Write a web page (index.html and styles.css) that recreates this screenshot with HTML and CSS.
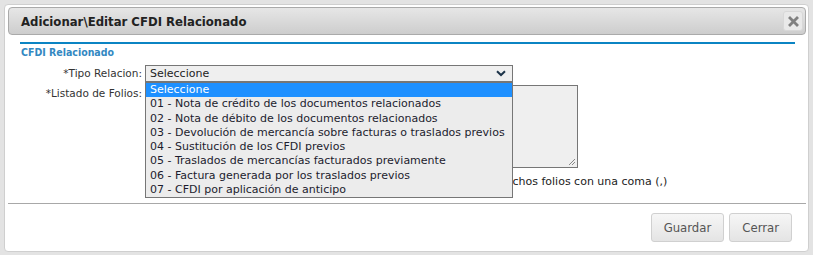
FILE: index.html
```html
<!DOCTYPE html>
<html lang="es">
<head>
<meta charset="utf-8">
<title>Adicionar\Editar CFDI Relacionado</title>
<link rel="stylesheet" href="styles.css">
</head>
<body>
<div class="dialog">
  <div class="titlebar">
    <span class="title">Adicionar\Editar CFDI Relacionado</span>
    <button class="close" type="button" aria-label="Cerrar">
      <svg width="11" height="11" viewBox="0 0 11 11"><path d="M2 2 L9 9 M9 2 L2 9" stroke="#808080" stroke-width="2.8" stroke-linecap="square"/></svg>
    </button>
  </div>
  <div class="content">
    <div class="section-head">CFDI Relacionado</div>
    <div class="form">
      <label class="lbl">*Tipo Relacion:</label>
      <div class="select-wrap">
        <div class="select">
          <span>Seleccione</span>
          <svg class="chev" width="10" height="7" viewBox="0 0 10 7"><path d="M1 1.2 L5 5 L9 1.2" fill="none" stroke="#1d3449" stroke-width="2"/></svg>
        </div>
        <ul class="options">
          <li class="sel">Seleccione</li>
          <li>01 - Nota de crédito de los documentos relacionados</li>
          <li>02 - Nota de débito de los documentos relacionados</li>
          <li>03 - Devolución de mercancía sobre facturas o traslados previos</li>
          <li>04 - Sustitución de los CFDI previos</li>
          <li>05 - Traslados de mercancías facturados previamente</li>
          <li>06 - Factura generada por los traslados previos</li>
          <li>07 - CFDI por aplicación de anticipo</li>
        </ul>
      </div>
      <label class="lbl">*Listado de Folios:</label>
      <div class="area-wrap">
        <div class="textarea">
          <svg class="grip" width="8" height="8" viewBox="0 0 8 8"><path d="M7 1 L1 7 M7 4 L4 7" stroke="#888" stroke-width="1"/></svg>
        </div>
        <div class="hint">En caso de tener varios UUIDs relacionados, por favor, separe muchos folios con una coma (,)</div>
      </div>
    </div>
  </div>
  <div class="footer">
    <button class="btn" type="button">Guardar</button>
    <button class="btn" type="button">Cerrar</button>
  </div>
</div>
</body>
</html>
```

FILE: styles.css
```css
html, body {
  margin: 0;
  padding: 0;
}
body {
  background: #e3e3e3;
  width: 813px;
  height: 255px;
  overflow: hidden;
  font-family: "DejaVu Sans", sans-serif;
  font-size: 11px;
  color: #222;
}
.dialog {
  box-sizing: border-box;
  margin: 4px 0 0 4px;
  width: 805px;
  height: 248px;
  background: #fff;
  border: 1px solid #cfcfcf;
  border-radius: 4px;
  padding: 2px 2px 0 3px;
  display: flex;
  flex-direction: column;
}
.titlebar {
  box-sizing: border-box;
  height: 28px;
  border: 1px solid #aaa;
  border-radius: 4px;
  background: linear-gradient(#e6e6e6, #cdcdcd);
  display: flex;
  align-items: center;
  justify-content: space-between;
  padding: 0 2px 0 12px;
}
.title {
  font-family: "DejaVu Sans Condensed", "DejaVu Sans", sans-serif;
  font-weight: bold;
  font-size: 13px;
  color: #222;
}
.close {
  box-sizing: border-box;
  width: 20px;
  height: 20px;
  padding: 0;
  border: 1px solid #d8d8d8;
  border-radius: 3px;
  background: #e9e9e9;
  display: flex;
  align-items: center;
  justify-content: center;
}
.content {
  margin: 7px 11px 0 12px;
  border-top: 2px solid #0b84c3;
  padding-top: 1px;
}
.section-head {
  font-family: "DejaVu Sans Condensed", "DejaVu Sans", sans-serif;
  color: #3388c2;
  font-weight: bold;
  font-size: 10.5px;
  line-height: 15px;
  padding-left: 1px;
}
.form {
  margin-top: 5px;
  display: grid;
  grid-template-columns: 122px 1fr;
  column-gap: 3px;
  row-gap: 3px;
  align-items: start;
}
.lbl {
  text-align: right;
  line-height: 17px;
  font-size: 10.5px;
  color: #333;
}
.select-wrap {
  position: relative;
  width: 368px;
  z-index: 2;
}
.select {
  box-sizing: border-box;
  height: 17px;
  border: 1px solid #767676;
  background: #efefef;
  display: flex;
  align-items: center;
  justify-content: space-between;
  padding: 0 6px 0 4px;
  line-height: 15px;
}
.options {
  position: absolute;
  top: 100%;
  left: 0;
  box-sizing: border-box;
  width: 368px;
  margin: 0;
  padding: 0;
  list-style: none;
  border: 1px solid #767676;
  background: #ececec;
}
.options li {
  height: 14.25px;
  line-height: 14px;
  padding-left: 4px;
  white-space: nowrap;
  color: #1c1c2e;
}
.options li.sel {
  background: #1e90ff;
  color: #fff;
}
.area-wrap {
  display: flex;
  flex-direction: column;
}
.textarea {
  box-sizing: border-box;
  width: 433px;
  height: 83px;
  border: 1px solid #767676;
  background: #efefef;
  position: relative;
  display: flex;
  align-items: flex-end;
  justify-content: flex-end;
  padding: 0 1px 1px 0;
}
.hint {
  margin-top: 6px;
  padding-left: 5px;
  line-height: 15px;
  color: #222;
  white-space: nowrap;
}
.footer {
  margin-top: auto;
  border-top: 1px solid #a8a8a8;
  height: 48px;
  display: flex;
  justify-content: flex-end;
  align-items: flex-start;
  gap: 5px;
  padding: 9px 14px 0 0;
  box-sizing: border-box;
}
.btn {
  box-sizing: border-box;
  height: 29px;
  padding: 0 12px;
  border: 1px solid #d0d0d0;
  border-radius: 3px;
  background: linear-gradient(#f6f6f6, #e4e4e4);
  font-family: "DejaVu Sans Condensed", "DejaVu Sans", sans-serif;
  font-size: 13px;
  color: #555;
}
```
